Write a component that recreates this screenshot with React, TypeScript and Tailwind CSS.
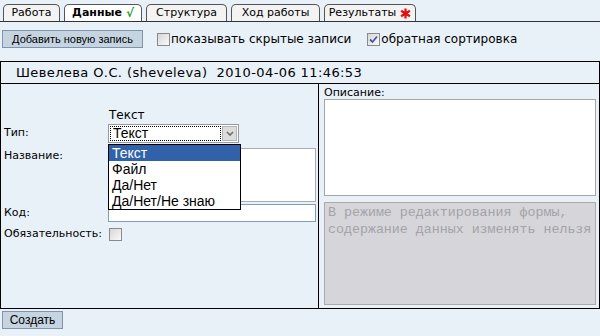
import React from 'react';

const tabs = [
  { label: 'Работа', w: 'w-[57px]' },
  { label: 'Данные', w: 'w-[78px]', active: true },
  { label: 'Структура', w: 'w-[81px]' },
  { label: 'Ход работы', w: 'w-[89px]' },
  { label: 'Результаты', w: 'w-[92px]', star: true },
];

function Checkbox({ checked }: { checked?: boolean }) {
  return (
    <span className="w-[13px] h-[13px] shrink-0 border border-[#8a8a8a] bg-gradient-to-br from-[#d6d6d6] to-[#fafafa] flex items-center justify-center">
      {checked && (
        <svg width="9" height="9" viewBox="0 0 9 9">
          <path d="M1 4.5 L3.5 7 L8 1.5" fill="none" stroke="#4a5aa8" strokeWidth="1.8" />
        </svg>
      )}
    </span>
  );
}

function XpButton({ children, className }: { children: React.ReactNode; className?: string }) {
  return (
    <button className={'h-[18px] border border-[#8193a8] bg-[#c6d4e2] text-black font-[\'Liberation_Sans\',sans-serif] flex items-center justify-center ' + (className ?? '')}>
      {children}
    </button>
  );
}

export default function App() {
  return (
    <div className="w-[600px] h-[336px] bg-[#e8f0f8] overflow-hidden font-['DejaVu_Sans',sans-serif] text-black">
      {/* tabs */}
      <div className="h-[22px] border-b border-[#333] flex items-end gap-[4px] pl-[3px]">
        {tabs.map((t) => (
          <div
            key={t.label}
            className={
              'h-[17px] border border-b-0 border-[#555] rounded-t-[5px] flex items-center justify-center gap-[4px] text-[11px] ' +
              t.w +
              (t.active ? ' bg-white font-bold' : ' bg-[#f3f3f3]')
            }
          >
            <span>{t.label}</span>
            {t.active && <span className="text-[#1c9a1c] font-bold text-[12px]">√</span>}
            {t.star && (
              <svg width="11" height="11" viewBox="0 0 10 10">
                <path d="M5 0.5 V9.5 M1 2.5 L9 7.5 M1 7.5 L9 2.5" stroke="#e01010" strokeWidth="2" />
              </svg>
            )}
          </div>
        ))}
      </div>

      {/* toolbar */}
      <div className="h-[39px] flex items-center pl-[2px] pb-[5px] text-[12px]">
        <XpButton className="w-[141px] text-[11px]">Добавить новую запись</XpButton>
        <div className="flex items-center ml-[14px]">
          <Checkbox />
          <span className="ml-[1px]">показывать скрытые записи</span>
        </div>
        <div className="flex items-center ml-[16px]">
          <Checkbox checked />
          <span className="ml-[1px]">обратная сортировка</span>
        </div>
      </div>

      {/* record */}
      <div className="border border-black">
        <div className="h-[22px] border-b border-black flex items-center pl-[15px] text-[13px] tracking-[0.4px]">
          Шевелева О.С. (sheveleva)&nbsp;&nbsp;2010-04-06 11:46:53
        </div>
        <div className="flex h-[224px]">
          <div className="w-[318px] border-r border-black relative pl-[3px] pr-[2px] pt-[22px] text-[11px]">
            <div className="flex h-[17px] items-center">
              <span className="w-[105px]" />
              <span className="text-[12px]">Текст</span>
            </div>
            <div className="flex items-center h-[19px] mt-[1px]">
              <span className="w-[104px]">Тип:</span>
              <div className="w-[131px] h-[19px] border border-[#9a9a9a] bg-white flex items-center p-[1px]">
                <div className="flex-1 h-full border border-dotted border-black flex items-center pl-[2px] text-[14px] font-['Liberation_Sans',sans-serif]">
                  Текст
                </div>
                <div className="w-[15px] h-full ml-[1px] bg-[#dcdcdc] border border-[#b5b5b5] flex items-center justify-center">
                  <svg width="8" height="6" viewBox="0 0 8 6">
                    <path d="M1 1 L4 4 L7 1" fill="none" stroke="#707070" strokeWidth="1.6" />
                  </svg>
                </div>
              </div>
            </div>
            <div className="flex mt-[5px]">
              <span className="w-[104px]">Название:</span>
              <div className="flex-1 h-[54px] border border-[#a5acb2] bg-white" />
            </div>
            <div className="flex items-center mt-[2px]">
              <span className="w-[104px]">Код:</span>
              <div className="flex-1 h-[18px] border border-[#7f9db9] bg-white" />
            </div>
            <div className="flex items-center mt-[4px]">
              <span className="w-[105px]">Обязательность:</span>
              <Checkbox />
            </div>

            {/* open dropdown */}
            <div className="absolute left-[107px] top-[60px] w-[133px] border border-black bg-white text-[14px] font-['Liberation_Sans',sans-serif]">
              <div className="h-[16px] leading-[16px] pl-[3px] bg-[#3161a8] text-white">Текст</div>
              <div className="h-[16px] leading-[16px] pl-[3px]">Файл</div>
              <div className="h-[16px] leading-[16px] pl-[3px]">Да/Нет</div>
              <div className="h-[16px] leading-[16px] pl-[3px]">Да/Нет/Не знаю</div>
            </div>
          </div>
          <div className="flex-1 pl-[5px] pr-[3px] pt-[2px] text-[11px] flex flex-col">
            <span className="h-[13px] leading-[13px]">Описание:</span>
            <div className="h-[97px] border border-[#a5a5a5] bg-white" />
            <div className="h-[103px] mt-[6px] border border-[#aaaaaa] bg-[#d6d5da] pl-[3px] pt-[1px] text-[13.3px] leading-[17px] text-[#a3a3a8] font-['Liberation_Mono',monospace]">
              В режиме редактирования формы,
              <br />
              содержание данных изменять нельзя
            </div>
          </div>
        </div>
      </div>

      <div className="pl-[2px] pt-[2px]">
        <XpButton className="w-[61px] text-[12px]">Создать</XpButton>
      </div>
    </div>
  );
}
